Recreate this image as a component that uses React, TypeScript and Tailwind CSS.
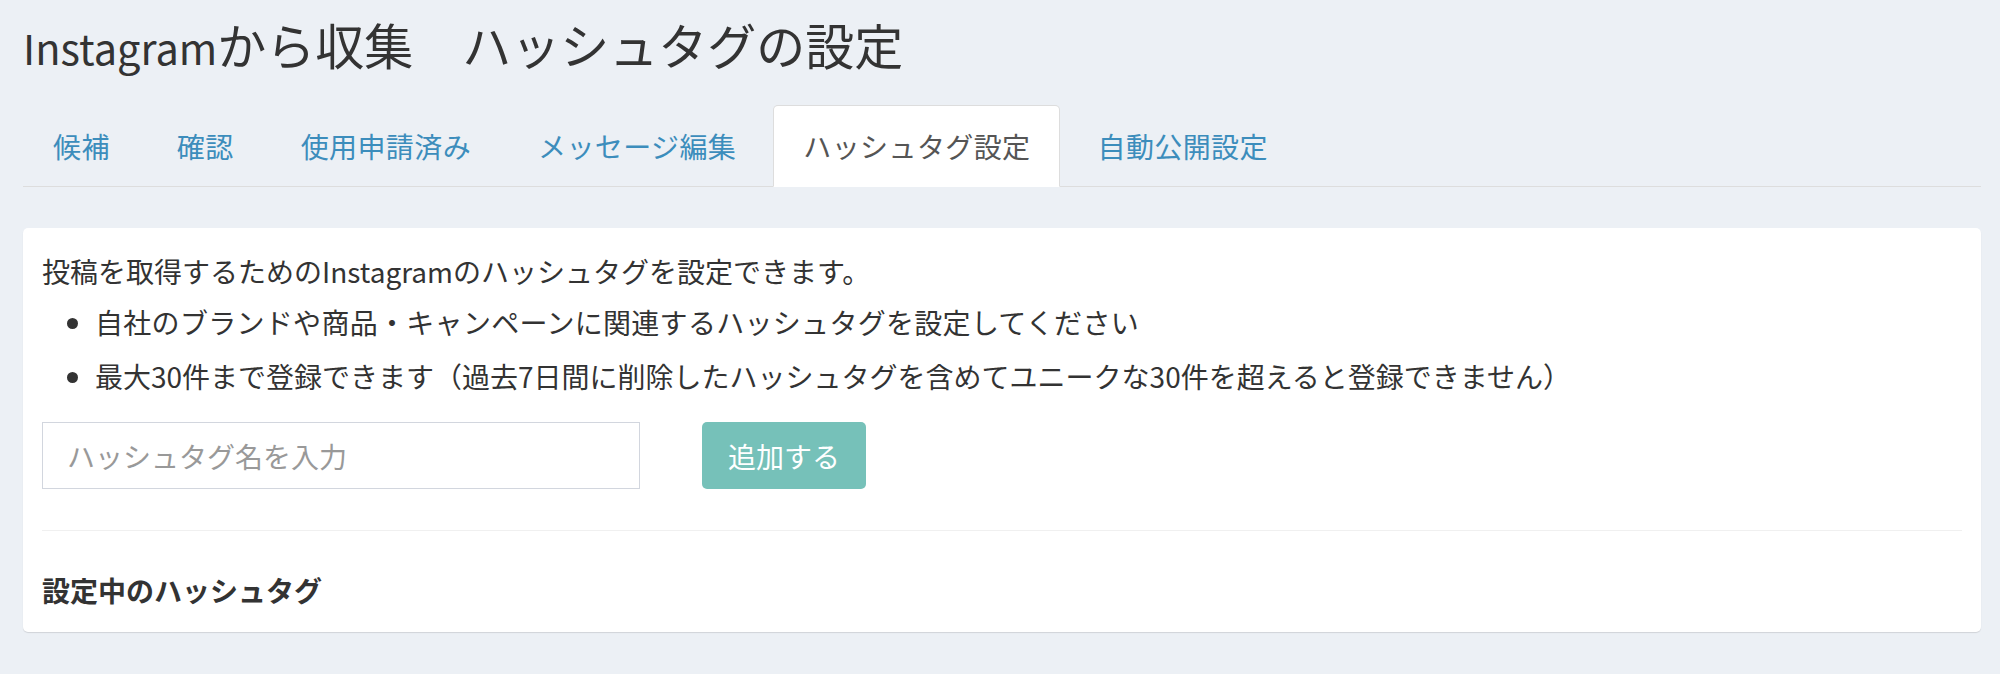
import React from "react";

const FONT = '"Noto Sans CJK JP", "Noto Sans", sans-serif';

const tabs = [
  { label: "候補", active: false },
  { label: "確認", active: false },
  { label: "使用申請済み", active: false },
  { label: "メッセージ編集", active: false },
  { label: "ハッシュタグ設定", active: true },
  { label: "自動公開設定", active: false },
];

export default function App() {
  return (
    <div
      className="min-h-[674px] w-full bg-[#ecf0f5] pl-[23px] pr-[19px] pt-[14px] text-[#333333]"
      style={{ fontFamily: FONT }}
    >
      <h1 className="h-[60px] text-[49px] leading-[60px] font-normal text-[#333333]">
        <span className="text-[41.5px] leading-none">Instagram</span>から収集　ハッシュタグの設定
      </h1>

      <div className="mt-[31px] flex border-b border-[#dddddd]">
        {tabs.map((t) =>
          t.active ? (
            <div
              key={t.label}
              className="-mb-px mr-[7px] rounded-t-[5px] border border-[#dddddd] border-b-transparent bg-white px-[29px] py-[20px] text-[28px] leading-[40px] tracking-[0.4px] text-[#555555]"
            >
              {t.label}
            </div>
          ) : (
            <div
              key={t.label}
              className="-mb-px mr-[7px] border border-transparent px-[29px] py-[20px] text-[28px] leading-[40px] tracking-[0.4px] text-[#3c8dbc]"
            >
              {t.label}
            </div>
          )
        )}
      </div>

      <div className="mt-[41px] rounded-[5px] bg-white px-[19px] pt-[23px] pb-[22px] shadow-[0_1px_1px_rgba(0,0,0,0.12)]">
        <p className="text-[28px] leading-[40px]">
          投稿を取得するためのInstagramのハッシュタグを設定できます。
        </p>
        <ul className="mt-[11px] list-disc pl-[53px] text-[28px] leading-[40px]">
          <li className="tracking-[0.3px]">
            自社のブランドや商品・キャンペーンに関連するハッシュタグを設定してください
          </li>
          <li className="mt-[14px]">
            最大30件まで登録できます（過去7日間に削除したハッシュタグを含めてユニークな30件を超えると登録できません）
          </li>
        </ul>

        <div className="mt-[26px] flex items-center gap-[62px]">
          <input
            type="text"
            placeholder="ハッシュタグ名を入力"
            className="h-[67px] w-[598px] border border-[#d2d6de] bg-white px-[24px] text-[28px] text-[#555555] outline-none placeholder:text-[#999999]"
            style={{ fontFamily: FONT }}
          />
          <button
            className="h-[67px] w-[164px] rounded-[5px] bg-[#76c1b9] text-[28px] text-white"
            style={{ fontFamily: FONT }}
          >
            追加する
          </button>
        </div>

        <div className="mt-[41px] border-t border-[#f0f0f0]" />

        <h3 className="mt-[39px] text-[28px] leading-[40px] font-bold text-[#333333]">
          設定中のハッシュタグ
        </h3>
      </div>
    </div>
  );
}
